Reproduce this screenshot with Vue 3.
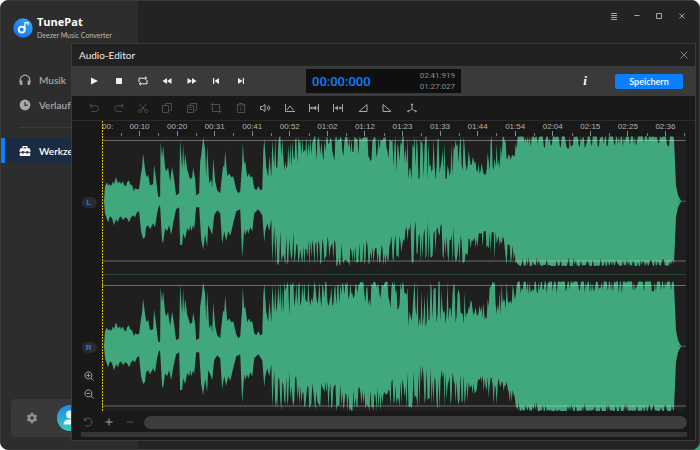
<template>
  <div class="window">
    <!-- Sidebar -->
    <aside class="sidebar">
      <div class="brand">
        <svg class="brand-logo" viewBox="0 0 20 20" aria-hidden="true">
          <defs>
            <linearGradient id="logoFill" x1="0" y1="1" x2="1" y2="0">
              <stop offset="0" stop-color="#1567f0" />
              <stop offset="1" stop-color="#2fb0fb" />
            </linearGradient>
          </defs>
          <circle cx="10" cy="10" r="9.7" fill="url(#logoFill)" />
          <circle cx="8.7" cy="11.6" r="3" fill="none" stroke="#fff" stroke-width="1.9" />
          <path d="M11.9 12V4.600h3.200v2.200" fill="none" stroke="#fff" stroke-width="1.2" />
        </svg>
        <div>
          <div class="brand-name">TunePat</div>
          <div class="brand-sub">Deezer Music Converter</div>
        </div>
      </div>

      <nav class="nav">
        <a href="#musik" class="nav-item">
          <svg viewBox="0 0 12 12" class="nav-icon">
            <path d="M1.2 8V6a4.8 4.8 0 0 1 9.6 0v2" fill="none" stroke="currentColor" stroke-width="1.3" />
            <path d="M.6 6.6h2.8V11H2A1.4 1.4 0 0 1 .6 9.6zM8.6 6.6h2.8v3A1.4 1.4 0 0 1 10 11H8.6z" fill="currentColor" />
          </svg>
          <span>Musik</span>
        </a>
        <a href="#verlauf" class="nav-item">
          <svg viewBox="0 0 12 12" class="nav-icon">
            <circle cx="6" cy="6" r="5.4" fill="currentColor" />
            <path d="M6 3v3.3h2.8" fill="none" stroke="#2d2d2d" stroke-width="1.2" />
          </svg>
          <span>Verlauf</span>
        </a>
        <hr class="nav-line" />
        <a href="#werkzeuge" class="nav-item active">
          <svg viewBox="0 0 12 12" class="nav-icon">
            <path d="M4 3.4V1.6h4v1.8" fill="none" stroke="currentColor" stroke-width="1.2" />
            <path d="M1.4 3.2h9.2L11.6 6v.8H8.8V6H7.4v.8H4.6V6H3.2v.8H.4V6zM.8 7.7h2.4v1h1.4v-1h2.8v1h1.4v-1h2.4V11H.8z" fill="currentColor" />
          </svg>
          <span>Werkzeuge</span>
        </a>
      </nav>

      <div class="account">
        <button class="gear" aria-label="Einstellungen">
          <svg viewBox="0 0 12 12">
            <path d="M4.9.8h2.2l.4 1.5 1 .6 1.5-.5 1.1 1.9L10 5.4v1.2l1.1 1.1L10 9.600l-1.500-.5-1 .6-.4 1.500H4.900l-.4-1.500-1-.6-1.500.5L.9 7.700 2 6.600V5.400L.9 4.300 2 2.400l1.500.5 1-.6z" fill="currentColor" />
            <circle cx="6" cy="6" r="1.8" fill="#393939" />
          </svg>
        </button>
        <svg class="avatar" viewBox="0 0 26 26" aria-hidden="true">
          <defs>
            <linearGradient id="avatarFill" x1="0" y1="0" x2="0" y2="1">
              <stop offset="0.1" stop-color="#1f8fe8" />
              <stop offset="1" stop-color="#3fc9bd" />
            </linearGradient>
          </defs>
          <circle cx="13" cy="13" r="13" fill="url(#avatarFill)" />
          <circle cx="13" cy="9.5" r="3.9" fill="#e3f7fb" />
          <path d="M6.500 19.500c0-3 2.200-5 5-5h3c2.800 0 5 2 5 5z" fill="#e3f7fb" />
        </svg>
      </div>
    </aside>

    <div class="window-buttons">
      <button v-for="b in windowButtons" :key="b.label" :aria-label="b.label">
        <svg viewBox="0 0 8 8"><path :d="b.d" fill="none" stroke="currentColor" /></svg>
      </button>
    </div>

    <!-- Audio editor dialog -->
    <section class="editor" aria-label="Audio-Editor">
      <header class="editor-title">
        <span>Audio-Editor</span>
        <button aria-label="Schließen">
          <svg viewBox="0 0 8 8"><path d="M.5 .5l7 7M7.5 .5l-7 7" fill="none" stroke="currentColor" stroke-width=".8" /></svg>
        </button>
      </header>

      <div class="transport">
        <div class="transport-buttons">
          <button v-for="b in transport" :key="b.label" :aria-label="b.label">
            <svg viewBox="0 0 12 12">
              <path :d="b.d" :class="b.line ? 'stroke' : 'fill'" />
            </svg>
          </button>
        </div>
        <div class="clock">
          <span class="clock-now">00:00:000</span>
          <span class="clock-total">02:41:919<br />01:27:027</span>
        </div>
        <div class="transport-right">
          <button class="info" aria-label="Info">i</button>
          <button class="save">Speichern</button>
        </div>
      </div>

      <div class="tools">
        <button v-for="t in tools" :key="t.label" :aria-label="t.label" :disabled="t.off">
          <svg viewBox="0 0 12 12">
            <path :d="t.d" class="stroke" />
            <path v-if="t.solid" :d="t.solid" class="fill" />
          </svg>
        </button>
      </div>

      <div class="stage">
        <div class="gutter">
          <div class="channel"><span class="badge">L</span></div>
          <div class="channel">
            <span class="badge">R</span>
            <button class="zoom first" aria-label="Vergrößern">
              <svg viewBox="0 0 10 10"><path d="M4.4 .9a3.5 3.5 0 1 0 .01 0M7 7l2.5 2.5M2.6 4.4h3.6M4.4 2.6v3.6" class="stroke" /></svg>
            </button>
            <button class="zoom" aria-label="Verkleinern">
              <svg viewBox="0 0 10 10"><path d="M4.4 .9a3.5 3.5 0 1 0 .01 0M7 7l2.5 2.5M2.6 4.4h3.6" class="stroke" /></svg>
            </button>
          </div>
        </div>

        <div class="timeline">
          <div class="ruler">
            <span class="ruler-start">00:</span>
            <span v-for="t in times" :key="t" class="ruler-cell">{{ t }}</span>
            <span class="ruler-end"></span>
          </div>
          <div class="waves">
            <template v-for="(w, i) in waves" :key="i">
              <hr v-if="i" class="split" />
              <svg class="wave" viewBox="0 0 583 131" preserveAspectRatio="none">
                <path :d="w" fill="#40a87c" />
                <path d="M575 65.5H583" stroke="#2f7358" />
                <path d="M0 4.5H583M0 125.5H583" stroke="#fff" stroke-opacity=".35" />
              </svg>
            </template>
          </div>
          <div class="playhead"></div>
        </div>
      </div>

      <footer class="bottom">
        <div class="scroll-row">
          <button class="dim" aria-label="Zurücksetzen">
            <svg viewBox="0 0 10 10"><path d="M1.5 3A4 4 0 1 1 2.5 8.3M1.3 .8v2.5h2.5" class="stroke" /></svg>
          </button>
          <button aria-label="Mehr Zoom"><svg viewBox="0 0 10 10"><path d="M5 1.5v7M1.5 5h7" class="stroke" /></svg></button>
          <button class="dim" aria-label="Weniger Zoom"><svg viewBox="0 0 10 10"><path d="M2 5h6" class="stroke" /></svg></button>
          <div class="scroll-thumb"></div>
        </div>
        <div class="scroll-base"></div>
      </footer>
    </section>
  </div>
</template>

<script setup>
const windowButtons = [
  { label: 'Menü', d: 'M1 1.5h6M1 3.5h6M1 5.5h6M1 7.5h6' },
  { label: 'Minimieren', d: 'M1.5 3.5h5' },
  { label: 'Maximieren', d: 'M1.5 1.5h5v5h-5z' },
  { label: 'Beenden', d: 'M1.5 1.5l5 5M6.5 1.5l-5 5' },
]

const transport = [
  { label: 'Wiedergabe', d: 'M3 2.5L10 6 3 9.5z' },
  { label: 'Stopp', d: 'M3 3h6v6H3z' },
  { label: 'Wiederholen', line: true, d: 'M2 7V3.2h7.5M8 1.6l1.7 1.6L8 4.8M10 5v3.8H2.5M4 7.2L2.3 8.8 4 10.4' },
  { label: 'Zurückspulen', d: 'M6 3v6L1.5 6zM10.5 3v6L6 6z' },
  { label: 'Vorspulen', d: 'M1.5 3v6L6 6zM6 3v6l4.5-3z' },
  { label: 'Zum Anfang', d: 'M3 3h1.200v6H3zM9 3v6L4.5 6z' },
  { label: 'Zum Ende', d: 'M7.8 3H9v6H7.8zM3 3v6l4.5-3z' },
]

const tools = [
  { label: 'Rückgängig', off: true, d: 'M4 1.5L1.8 3.7 4 6M2 3.7h5.5a2.9 2.9 0 0 1 0 5.8H3.5' },
  { label: 'Wiederholen', off: true, d: 'M8 1.5l2.2 2.2L8 6M10 3.7H4.5a2.9 2.9 0 0 0 0 5.8H8.5' },
  { label: 'Ausschneiden', off: true, d: 'M2.2 1.5l6 7M9.8 1.5l-6 7M2.8 7.7a1.5 1.5 0 1 0 .01 0M9.2 7.7a1.5 1.5 0 1 0 .01 0' },
  { label: 'Kopieren', off: true, d: 'M4.5 3.5V1.5h6v7h-2M1.5 3.5h6v7h-6z' },
  { label: 'Einfügen', off: true, d: 'M4.5 3.5V1.5h6v7h-2M1.5 3.5h6v7h-6zM3.2 5.5h2.6M3.2 7.5h2.6' },
  { label: 'Zuschneiden', off: true, d: 'M2.5 .5v9h9M.5 2.5h9v9' },
  { label: 'Löschen', off: true, d: 'M1 3h10M4 3V1.5h4V3M2.5 3v7.5h7V3M6 5v3.5' },
  { label: 'Lautstärke', d: 'M1.5 4.5h2L6 2.5v7L3.5 7.5h-2zM8 4.500a2 2 0 0 1 0 3M9.500 3.300a3.800 3.800 0 0 1 0 5.400' },
  { label: 'Normalisieren', d: 'M1.5 2v7.5h9.500M3 8L6 4 9.500 8.300' },
  { label: 'Stille am Anfang', d: 'M1.5 2v8M10.5 2v8M2 6h3', solid: 'M2.3 6l2-1.7v3.400zM5 5.200h1L8 3.700v4.600L6 6.800H5zM8.600 4.800h.8v2.400h-.8z' },
  { label: 'Stille einfügen', d: 'M1.5 2v8M10.5 2v8M7 6h3', solid: 'M2.800 5.200h1.200L6 3.500v5L4 6.800H2.800zM7.300 4.400L9.500 6 7.300 7.600z' },
  { label: 'Einblenden', d: 'M10 2.500v7H2z' },
  { label: 'Ausblenden', d: 'M2 2.500v7h8z' },
  { label: 'Aufteilen', d: 'M6 2v4.500M6 6.500C5.5 8 4 8.800 2 9M6 6.500C6.5 8 8 8.800 10 9', solid: 'M6 1.200l1.500 2h-3zM.8 9.200l2-1.500v2.800zM11.200 9.200l-2-1.500v2.800z' },
]

const times = [
  '00:10', '00:20', '00:31', '00:41', '00:52', '01:02', '01:12', '01:23',
  '01:33', '01:44', '01:54', '02:04', '02:15', '02:25', '02:36',
]

// Quiet intro: [position, level] pairs, upper and lower half
const introTop = [
  [2, 0], [3, 15], [5, 19], [6, 16], [8, 17], [9, 15], [11, 20], [12, 17], [14, 24], [16, 18], [18, 20],
  [19, 17], [21, 20], [22, 16], [24, 15], [25, 19], [27, 21], [28, 17], [30, 16], [32, 10], [33, 13],
  [35, 12], [37, 12], [38, 20], [39, 28], [40, 34], [41, 48], [43, 32], [44, 26], [45, 24],
  [46, 27], [48, 16], [51, 17], [52, 37], [54, 22], [56, 5], [58, 4], [58.5, 60], [60, 44], [61, 56],
  [63, 34], [64, 30], [66, 34], [68, 20], [70, 35], [72, 22], [74, 6], [77, 8], [78, 62], [80, 32],
  [81, 58], [82, 34], [83, 48], [85, 32], [88, 22], [90, 24], [91, 34], [93, 22], [94, 6], [97, 8],
  [98, 40], [99, 46], [100, 55], [101, 64], [103, 52], [104, 24], [105, 56], [107, 18], [109, 22], [110, 13],
  [111, 44], [113, 20], [115, 11], [118, 8], [120, 28], [121, 36], [122, 34], [123, 51], [125, 25],
  [127, 28], [129, 24], [131, 25], [134, 12], [136, 8], [138, 10], [140, 40], [140.5, 59], [142, 38],
  [143, 40], [145, 24], [147, 28], [148, 24], [150, 25], [152, 13], [154, 11], [156, 15], [158, 11], [160, 12],
  [161, 50], [162, 63], [164, 34], [166, 24], [167, 46], [169, 24], [170, 62], [172, 34],
]
const introBottom = [
  [2, 0], [3, 12], [5, 18], [6, 21], [8, 15], [10, 17], [12, 24], [14, 18], [16, 21], [17, 17], [19, 15],
  [21, 19], [23, 16], [25, 17], [27, 21], [29, 16], [31, 14], [33, 16], [35, 11], [37, 10], [39, 30],
  [41, 38], [43, 36], [44, 26], [46, 24], [48, 28], [51, 22], [53, 26], [55, 12],
  [57, 4], [58, 5], [60, 40], [61, 42], [63, 27], [65, 30], [67, 24], [69, 34], [71, 22], [74, 8],
  [77, 6], [78, 44], [80, 44], [81, 32], [83, 38], [85, 27], [87, 30], [88, 24], [89, 30], [91, 24],
  [92, 28], [94, 6], [97, 6], [99, 38], [101, 49], [103, 33], [105, 46], [106, 24], [108, 28], [110, 34],
  [112, 14], [115, 9], [118, 12], [120, 43], [122, 30], [124, 40], [126, 30], [128, 35], [131, 22],
  [134, 10], [138, 8], [140, 57], [142, 28], [143, 34], [145, 28], [146, 33], [148, 26], [150, 30],
  [152, 12], [154, 10], [156, 8], [160, 14], [162, 41], [163, 30], [165, 22], [167, 30], [169, 18],
  [170, 61], [172, 24],
]

// Loud part: [position, low top, high top, low bottom, high bottom, share of spikes]
const loud = [
  [173, 30, 66, 26, 64, 0.6], [190, 30, 66, 24, 62, 0.6], [200, 42, 66, 38, 64, 0.55], [225, 36, 66, 34, 64, 0.5],
  [250, 48, 66, 42, 66, 0.6], [270, 38, 66, 38, 65, 0.55], [283, 48, 66, 46, 65, 0.5],
  [290, 32, 64, 32, 60, 0.45], [300, 20, 65, 26, 62, 0.42], [320, 17, 65, 16, 61, 0.45], [340, 22, 65, 22, 62, 0.45],
  [362, 20, 64, 24, 62, 0.45], [367, 34, 47, 38, 52, 0.4], [373, 29, 40, 36, 48, 0.4],
  [383, 25, 46, 24, 44, 0.4], [388, 30, 65, 28, 60, 0.4], [398, 30, 65, 32, 62, 0.4], [404, 36, 64, 34, 64, 0.4],
  [412, 42, 62, 46, 60, 0.4], [415, 52, 68, 56, 66, 0.75], [571, 54, 68, 58, 66, 0.75],
]
const tail = [[571, 63], [572, 40], [573, 16], [575, 6], [577, 2], [579, 0]]

function makeRandom(seed) {
  let s = seed
  return () => {
    s = (s * 1664525 + 1013904223) % 4294967296
    return s / 4294967296
  }
}

function levelsAt(x) {
  const i = Math.max(1, loud.findIndex(p => p[0] >= x))
  const a = loud[i - 1]
  const b = loud[i]
  const t = (x - a[0]) / (b[0] - a[0])
  return a.map((v, k) => v + (b[k] - v) * t)
}

function side(intro, col, random) {
  const points = [...intro]
  for (let x = 173; x < 571; x += 1) {
    const l = levelsAt(x)
    const share = random() < l[5] ? 0.7 + random() * 0.35 : random() * 0.45
    points.push([x, Math.min(65, l[col] + (l[col + 1] - l[col]) * share)])
  }
  return [...points, ...tail]
}

function makeWave(seed) {
  const random = makeRandom(seed)
  const top = side(introTop, 1, random).map(([x, v]) => `${x} ${(65.5 - v).toFixed(1)}`)
  const bottom = side(introBottom, 3, random).map(([x, v]) => `${x} ${(65.5 + v).toFixed(1)}`)
  return `M${top.join('L')}L${bottom.reverse().join('L')}Z`
}

const waves = [makeWave(41), makeWave(907)]
</script>

<style>
body {
  margin: 0;
  background: radial-gradient(circle at bottom right, #3fa77b 20px, #fff 20px);
}
</style>

<style scoped>
* { box-sizing: border-box; }
button {
  border: 0; padding: 0; background: none;
  color: inherit; font: inherit;
  display: flex; align-items: center; justify-content: center;
}
.fill { fill: currentColor; }
.stroke { fill: none; stroke: currentColor; }

.window {
  position: relative;
  height: 100vh;
  display: flex;
  overflow: hidden;
  border: 1px solid #3a3a3a;
  border-radius: 8px;
  background: #232323;
  color: #eee;
  font-family: Lato, "Open Sans", sans-serif;
}

/* Sidebar */
.sidebar {
  width: 137px;
  display: flex; flex-direction: column;
  background: #2d2d2d;
}
.brand {
  display: flex; align-items: center; gap: 4px;
  padding: 13px 0 0 12px;
  white-space: nowrap;
}
.brand-logo { width: 20px; height: 20px; }
.brand-name { font: bold 11px/15px "Open Sans", sans-serif; color: #fff; }
.brand-sub { font-size: 7px; line-height: 12px; color: #bbb; }
.nav { padding-top: 26px; }
.nav-item {
  height: 25px;
  display: flex; align-items: center; gap: 8px;
  padding-left: 14px;
  border-left: 4px solid transparent;
  color: #a8a8a8;
  font-size: 10px; font-weight: 600;
  text-decoration: none;
}
.nav-icon { width: 12px; height: 12px; }
.nav-line { height: 1px; margin: 10px 18px; border: 0; background: #3c3c3c; }
.nav-item.active { border-color: #0a80ff; background: #1b2b42; color: #fff; }
.account {
  display: flex; align-items: center; gap: 18px;
  height: 38px;
  margin: auto 10px 12px;
  padding-left: 14px;
  border-radius: 4px;
  background: #393939;
}
.gear { width: 14px; height: 14px; color: #929292; }
.gear svg { width: 12px; }
.avatar { width: 26px; height: 26px; }

.window-buttons {
  display: flex;
  width: 90px; height: 14px;
  margin: 8px 6px 0 auto;
  color: #a5a5a5;
}
.window-buttons button { flex: 1; }
.window-buttons svg { width: 8px; height: 8px; }

/* Dialog over the main window */
.editor {
  position: absolute;
  left: 70px; right: 3px; top: 42px; bottom: 8px;
  display: flex; flex-direction: column;
  border: 1px solid #3b3b3b;
  background: #191919;
}
.editor-title {
  display: flex; align-items: center; justify-content: space-between;
  height: 22px;
  padding: 0 7px;
  background: #212121;
  font-size: 10px;
}
.editor-title button { color: #999; }
.editor-title svg { width: 8px; height: 8px; }

.transport {
  display: grid; grid-template-columns: 1fr auto 1fr; align-items: center;
  height: 30px;
  background: #3a3a3a;
}
.transport-buttons { display: flex; width: 171px; margin-left: 10px; }
.transport-buttons button, .tools button { flex: 1; }
.transport-buttons svg, .tools svg { width: 12px; height: 12px; }
.clock {
  display: flex; align-items: center; justify-content: space-between;
  width: 155px; height: 24px;
  padding: 0 6px;
  background: #0f0f0f;
  font-family: Roboto, sans-serif;
}
.clock-now { color: #0a80ff; font-size: 13px; font-weight: 500; }
.clock-total { color: #8c8c8c; font-size: 8px; line-height: 11px; }
.transport-right { display: flex; justify-content: flex-end; align-items: center; gap: 24px; padding-right: 12px; }
.info { width: 12px; font: italic bold 13px "Liberation Serif", serif; color: #fff; }
.save {
  width: 68px; height: 15px;
  border-radius: 2px;
  background: #0a80ff;
  color: #fff;
  font-size: 9px; font-weight: 600;
}

.tools {
  display: flex;
  width: 342px; height: 24px;
  margin-left: 10px;
  color: #a8a8a8;
}
.tools button:disabled { color: #4c4c4c; }

.stage {
  flex: 1; min-height: 0;
  display: flex;
  padding-right: 9px;
  border-top: 1px solid #2b2b2b;
}
.gutter {
  width: 30px;
  display: flex; flex-direction: column; gap: 14px;
  padding-top: 15px;
}
.channel {
  flex: 1;
  display: flex; flex-direction: column; align-items: center;
  padding: 61px 0 0 4px;
}
.badge {
  width: 15px;
  border-radius: 6px;
  background: #2b2b2b;
  color: #0a80ff;
  font: bold 8px/11px "Liberation Sans", sans-serif;
  text-align: center;
}
.zoom { width: 14px; height: 14px; margin-top: 4px; color: #a8a8a8; }
.zoom.first { margin-top: 16px; }
.zoom svg { width: 10px; height: 10px; }

.timeline {
  position: relative;
  flex: 1;
  display: flex; flex-direction: column;
}
.ruler {
  display: flex;
  height: 15px;
  color: #b4b4b4;
  font: 8px/12px "Liberation Sans", sans-serif;
}
.ruler-start { flex: 0.5 1 0; min-width: 0; }
.ruler-cell {
  flex: 1 1 0; min-width: 0;
  text-align: center;
  background:
    linear-gradient(#8a8a8a, #8a8a8a) 50% 100% / 1px 5px no-repeat,
    linear-gradient(#777, #777) 0 100% / 1px 3px no-repeat;
}
.ruler-end {
  flex: 0.05 1 0;
  background: linear-gradient(#777, #777) 0 100% / 1px 3px no-repeat;
}
.waves {
  flex: 1; min-height: 0;
  display: flex; flex-direction: column;
  background: #1f1f1f;
}
.wave { flex: 1; width: 100%; min-height: 0; display: block; }
.split { width: 100%; height: 1px; margin: 7px 0 6px; border: 0; background: #29463a; }
.playhead {
  position: absolute; left: 0; top: 0; bottom: 0;
  width: 1px;
  background: repeating-linear-gradient(#e6c300 0 2px, transparent 2px 3px);
}

.bottom { padding: 4px 8px 3px 9px; }
.scroll-row { display: flex; align-items: center; height: 14px; color: #a8a8a8; }
.scroll-row button { width: 14px; height: 14px; margin-right: 7px; }
.scroll-row svg { width: 10px; height: 10px; }
.scroll-row .dim { color: #5a5a5a; }
.scroll-thumb { flex: 1; height: 13px; border-radius: 7px; background: #3d3d3d; }
.scroll-base { height: 5px; margin-top: 3px; background: #363636; }
</style>
